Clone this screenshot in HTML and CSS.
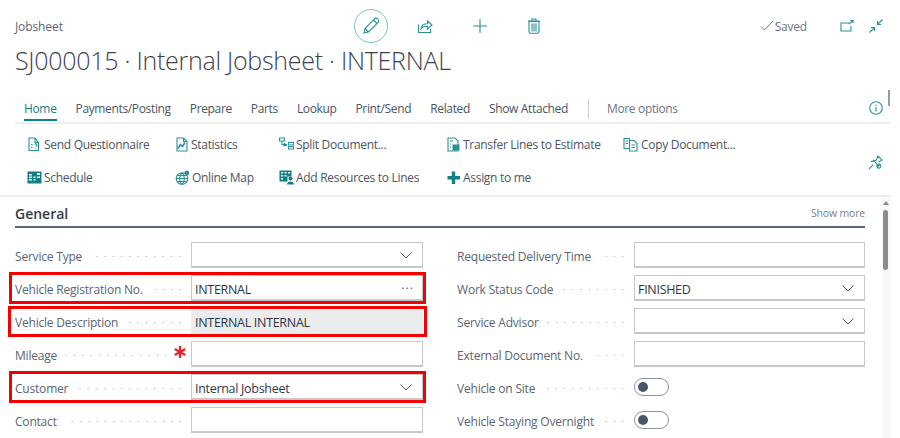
FILE: index.html
```html
<!DOCTYPE html>
<html lang="en">
<head>
<meta charset="utf-8">
<title>Jobsheet</title>
<link rel="stylesheet" href="styles.css">
</head>
<body>
<div class="page">
  <header class="head">
    <div class="topbar">
      <span class="crumb">Jobsheet</span>
      <div class="tools">
        <span class="edit"><svg class="ic" width="20" height="20" viewBox="0 0 20 20"><path d="M3 17l1-4.500L13.800 2.700a1.700 1.700 0 0 1 2.400 0l1.100 1.100a1.700 1.700 0 0 1 0 2.400L7.500 16zM4 12.500L7.500 16M12.500 4l3.500 3.500"/></svg></span>
        <svg class="ic share" width="16" height="16" viewBox="0 0 16 16"><path d="M1.500 6.500v8h12V11M4 10.500c.5-3 3-4.800 6.500-4.800V3l4.500 4-4.500 4V8.300c-2.800-.1-5 .5-6.500 2.200z"/></svg>
        <svg class="ic plus" width="16" height="16" viewBox="0 0 16 16"><path d="M8 1v14M1 8h14"/></svg>
        <svg class="ic trash" width="14" height="16" viewBox="0 0 14 16"><path d="M2 3.500h10V14a1.200 1.200 0 0 1-1.200 1.200H3.200A1.200 1.200 0 0 1 2 14zM1 3h12M5 3V1h4v2"/><path class="fill" d="M4 5.500h6v8H4z"/></svg>
      </div>
      <div class="status">
        <svg class="tick" width="14" height="12" viewBox="0 0 14 12"><path d="M1 6.500l3.500 3.500L13 1"/></svg>
        <span>Saved</span>
        <svg class="ic pop" width="14" height="12" viewBox="0 0 14 12"><path d="M9 3H1v8h10V6M9 4l4-3.500M10.500.5H13V3"/></svg>
        <svg class="ic shrink" width="14" height="14" viewBox="0 0 14 14"><path d="M13.500.5L8.500 5.500M8.500 2v3.500H12M.5 13.500l5-5M2 8.500h3.500V12"/></svg>
      </div>
    </div>
    <h1 class="title">SJ000015 · Internal Jobsheet · INTERNAL</h1>
    <nav class="tabs">
      <a class="tab active">Home</a>
      <a class="tab">Payments/Posting</a>
      <a class="tab">Prepare</a>
      <a class="tab">Parts</a>
      <a class="tab">Lookup</a>
      <a class="tab">Print/Send</a>
      <a class="tab">Related</a>
      <a class="tab">Show Attached</a>
      <span class="sep"></span>
      <a class="tab more">More options</a>
      <svg class="ic info" width="14" height="14" viewBox="0 0 14 14"><circle cx="7" cy="7" r="6.300"/><path d="M7 6v4.500M7 3.500v1.200"/></svg>
    </nav>
  </header>

  <section class="ribbon">
    <div class="acts">
      <div class="col c1">
        <a class="act"><svg class="ic" width="15" height="15" viewBox="0 0 15 15"><path d="M11.500 5.500V13.500H2V1h6zM8 1v4.500h3.500M4 7.500h1.500M4 10.500h1.500M7.500 7.500c.5-1 2.500-1 2.500.3 0 1-1.200 1-1.200 2M8.800 11.500v.8"/></svg>Send Questionnaire</a>
        <a class="act"><svg class="solid" width="15" height="15" viewBox="0 0 15 15"><path d="M.5 1.500h14v12H.500zM2 4h3v1.500H2zM2 6.500h3V8H2zM2 9h3v1.500H2zM6.500 6.500h2V8h-2zM6.500 9h2v1.500h-2zM10 3h3v2h-3zM10 6.500h3V8h-3z" fill-rule="evenodd"/></svg>Schedule</a>
      </div>
      <div class="col c2">
        <a class="act"><svg class="ic" width="14" height="15" viewBox="0 0 14 15"><path d="M2 1h6.500L12 4.500V14H2zM8.500 1v3.500H12"/><path class="bold" d="M3 11.500l2.500-4 2 2L10 5.500"/></svg>Statistics</a>
        <a class="act"><svg class="ic" width="15" height="15" viewBox="0 0 15 15"><circle cx="7" cy="8.500" r="5.800"/><path d="M1.200 8.500h11.600M7 2.700c-3.200 3-3.200 8.600 0 11.600M7 2.700c3.200 3 3.200 8.600 0 11.600M2.200 5.500h9.600M2.200 11.500h9.600"/><circle class="fill" cx="11.800" cy="3" r="2.400"/></svg>Online Map</a>
      </div>
      <div class="col c3">
        <a class="act"><svg class="ic" width="15" height="15" viewBox="0 0 15 15"><path d="M.5 1h5v3h-5zM9.500 5.500h5V8h-5zM9.500 9.500h5V12h-5zM3 4.500v3h5M5 6l1.500 1.500L5 9" /><path class="bold" d="M4 8h4"/></svg>Split Document...</a>
        <a class="act"><svg class="solid" width="15" height="15" viewBox="0 0 15 15"><path d="M.5.500h12v6h-4v5h-8zM2 2v1.500h2V2zM5.500 2v1.500h2V2zM9 2v1.500h2V2zM2 5v1.500h2V5zM5.500 5v1.500h2V5zM2 8v1.500h2V8z" fill-rule="evenodd"/><circle cx="11.500" cy="8.500" r="2"/><path d="M8 14.500c0-4 7-4 7 0z"/><circle cx="6.500" cy="10" r="1.500"/></svg>Add Resources to Lines</a>
      </div>
      <div class="col c4">
        <a class="act"><svg class="ic" width="13" height="15" viewBox="0 0 13 15"><path d="M1 1h7l3 3v10H1zM3 4h3M3 7h1M3 10h1"/><path class="fill" d="M5.500 7.500h7v6h-7z"/></svg>Transfer Lines to Estimate</a>
        <a class="act"><svg class="solid" width="13" height="13" viewBox="0 0 13 13"><path d="M4.800.5h3.400v12.500H4.800zM.5 5h12.500v3.400H.5z"/></svg>Assign to me</a>
      </div>
      <div class="col c5">
        <a class="act"><svg class="ic" width="15" height="15" viewBox="0 0 15 15"><path d="M1 1.500h5.500v10H1zM6.500 3.500h4.500L14 6.500v7.500H6.500zM8.500 8h3.500M8.500 10.500h3.500M2.500 4h2.500M2.500 6.500h2.500"/></svg>Copy Document...</a>
      </div>
    </div>
    <svg class="ic pin" width="15" height="15" viewBox="0 0 15 15"><path d="M.8 14.200l4.500-4.500M2.500 6.800l5.700-1.500L10 1l4 4.200-3.500 2M5 4.800l5.500 6M12 9.500a2 2 0 1 1-2.800 2.800A2 2 0 0 1 12 9.500zM9.300 12.200L12 9.500"/></svg>
  </section>

  <main class="content">
    <div class="sechead">
      <h2>General</h2>
      <a class="showmore">Show more</a>
    </div>
    <div class="form">
      <div class="fcol">
        <div class="row"><label>Service Type</label><i class="dots"></i><div class="input"><svg class="chev" width="12" height="7" viewBox="0 0 12 7"><path d="M.5.500L6 6l5.500-5.500"/></svg></div></div>
        <div class="row hl"><label>Vehicle Registration No.</label><i class="dots"></i><div class="input"><span>INTERNAL</span><b class="ell">···</b></div></div>
        <div class="row hl wide"><label>Vehicle Description</label><i class="dots"></i><div class="input ro"><span>INTERNAL INTERNAL</span></div></div>
        <div class="row"><label>Mileage</label><i class="dots"></i><svg class="req" width="12" height="12" viewBox="0 0 12 12"><path d="M6 0v12M.8 3l10.400 6M.8 9l10.400-6"/></svg><div class="input"></div></div>
        <div class="row hl"><label>Customer</label><i class="dots"></i><div class="input"><span>Internal Jobsheet</span><svg class="chev" width="12" height="7" viewBox="0 0 12 7"><path d="M.5.500L6 6l5.500-5.500"/></svg></div></div>
        <div class="row"><label>Contact</label><i class="dots"></i><div class="input"></div></div>
      </div>
      <div class="fcol">
        <div class="row"><label>Requested Delivery Time</label><i class="dots"></i><div class="input"></div></div>
        <div class="row"><label>Work Status Code</label><i class="dots"></i><div class="input"><span>FINISHED</span><svg class="chev" width="12" height="7" viewBox="0 0 12 7"><path d="M.5.500L6 6l5.500-5.500"/></svg></div></div>
        <div class="row"><label>Service Advisor</label><i class="dots"></i><div class="input"><svg class="chev" width="12" height="7" viewBox="0 0 12 7"><path d="M.5.500L6 6l5.500-5.500"/></svg></div></div>
        <div class="row"><label>External Document No.</label><i class="dots"></i><div class="input"></div></div>
        <div class="row"><label>Vehicle on Site</label><i class="dots"></i><div class="slot"><span class="toggle"></span></div></div>
        <div class="row"><label>Vehicle Staying Overnight</label><i class="dots"></i><div class="slot"><span class="toggle"></span></div></div>
      </div>
    </div>
  </main>

  <div class="topscroll"></div>
  <div class="scrollbar"><span class="arrow"></span><span class="thumb"></span></div>
</div>
</body>
</html>
```
FILE: styles.css
```css
* { box-sizing: border-box; }
html, body { margin: 0; height: 100%; overflow: hidden; background: #fff; }
body { font-family: "Open Sans", "Noto Sans", sans-serif; font-size: 12px; color: #505c6d; }
.page { position: relative; width: 900px; height: 438px; overflow: hidden; }
svg { display: block; flex: none; fill: none; }
.ic { stroke: #2b9197; stroke-width: 1.1; }
.ic .fill { fill: #2b9197; stroke: none; }
.trash .fill { opacity: .55; }
.ic .bold { stroke-width: 1.700; }
.solid { fill: #127f86; }

.head { padding: 8px 0 0 15px; width: 890px; }
.topbar { display: flex; align-items: center; height: 36px; }
.crumb { width: 339px; font-size: 12px; letter-spacing: -.1px; color: #5d6674; }
.tools { display: flex; align-items: center; }
.edit { width: 34px; height: 34px; border: 1px solid #7cc0c4; border-radius: 50%; display: flex; align-items: center; justify-content: center; margin-right: 29px; }
.share { margin-right: 39px; }
.plus { margin-right: 39px; }
.status { margin-left: auto; display: flex; align-items: center; font-size: 12px; letter-spacing: -.2px; color: #6d7682; }
.tick { stroke: #6d7682; stroke-width: 1; margin-right: 1px; }
.pop { margin-left: 33px; }
.shrink { margin: 0 7px 0 15px; }
.title { margin: 0; height: 39px; font-size: 25px; line-height: 33px; font-weight: 300; letter-spacing: -.27px; color: #3c4350; white-space: nowrap; }

.tabs { display: flex; align-items: center; height: 41px; padding-top: 11px; border-bottom: 2px solid #eeeeee; font-size: 12px; letter-spacing: -.35px; color: #4b5462; position: relative; }
.tab { margin-right: 19px; white-space: nowrap; padding: 5px 0 2px; border-bottom: 2px solid transparent; }
.tab.active { margin-left: 9px; color: #127f86; border-bottom-color: #127f86; }
.sep { width: 1px; height: 19px; background: #c9cdd2; margin: 0 18px 0 1px; }
.more { color: #6b7685; }
.info { margin-left: auto; margin-right: 7px; }

.ribbon { display: flex; justify-content: space-between; align-items: center; width: 890px; height: 73px; padding: 3px 7px 0 27px; border-bottom: 2px solid #eeeeee; }
.acts { display: flex; font-size: 12px; letter-spacing: -.3px; color: #4b5462; }
.col { display: flex; flex-direction: column; gap: 14px; }
.c1 { width: 148px; }
.c2 { width: 104px; }
.c3 { width: 168px; }
.c4 { width: 176px; }
.act { display: flex; align-items: center; gap: 2px; height: 19px; white-space: nowrap; }
.c4 .act, .c5 .act { gap: 3px; }
.pin { margin-top: 2px; }

.content { padding: 0 0 0 15px; width: 865px; }
.sechead { display: flex; justify-content: space-between; align-items: center; height: 31px; padding-top: 3px; border-bottom: 2px solid #5c667b; }
.sechead h2 { margin: 0; font-size: 14px; font-weight: 600; color: #333b47; }
.showmore { font-size: 10.500px; letter-spacing: -.17px; color: #7a838f; }
.form { display: flex; gap: 34px; padding-top: 14px; }
.fcol { display: flex; flex-direction: column; gap: 7px; width: 408px; }
.row { position: relative; display: flex; align-items: center; height: 26px; }
.row label { white-space: nowrap; font-size: 12px; letter-spacing: -.2px; color: #5a6473; padding-top: 3px; }
.dots { flex: 1; height: 3px; margin: 3px 7px 0 8px; background: radial-gradient(circle, #b4b9c0 .7px, transparent 1px) right center / 8.300px 3px repeat-x; }
.input { flex: none; width: 232px; height: 26px; display: flex; align-items: center; justify-content: space-between; padding: 2px 10px 0 3px; border: 1px solid #c4c8cd; border-bottom-width: 2px; font-size: 12.500px; letter-spacing: -.3px; color: #2f3641; }
.input span { padding-top: 2px; }
.fcol + .fcol .input, .fcol + .fcol .slot { width: 231px; }
.ro { background: #ebecee; border-color: #ebecee; }
.chev { stroke: #59626f; stroke-width: 1; margin-left: auto; }
.ell { font-weight: 400; letter-spacing: 1px; color: #59626f; margin-right: -2px; }
.req { stroke: #e8222a; stroke-width: 2.200; margin: 0 5px 0 -3px; position: relative; top: -2px; }
.slot { flex: none; width: 232px; display: flex; align-items: center; }
.toggle { position: relative; width: 35px; height: 18px; border: 1px solid #8b929c; border-radius: 9px; }
.toggle::before { content: ""; position: absolute; left: 3px; top: 3px; width: 10px; height: 10px; border-radius: 50%; background: #4a566b; }

.hl::after { content: ""; position: absolute; left: -6px; right: -3px; top: -3px; bottom: -3px; border: 3px solid #f40000; pointer-events: none; }
.wide::after { left: -7px; right: -4px; top: -2px; bottom: -3px; }

.topscroll { position: absolute; left: 888px; top: 90px; width: 2px; height: 16px; background: #9a9a9a; }
.scrollbar { position: absolute; left: 882px; top: 197px; bottom: 0; width: 8px; background: #f8f8f8; }
.arrow { position: absolute; left: 1px; top: 4px; border: 3px solid transparent; border-top: 0; border-bottom: 4px solid #8a8a8a; }
.thumb { position: absolute; left: 1px; top: 13px; width: 5px; height: 60px; border-radius: 3px; background: #8c8c8c; }
```
